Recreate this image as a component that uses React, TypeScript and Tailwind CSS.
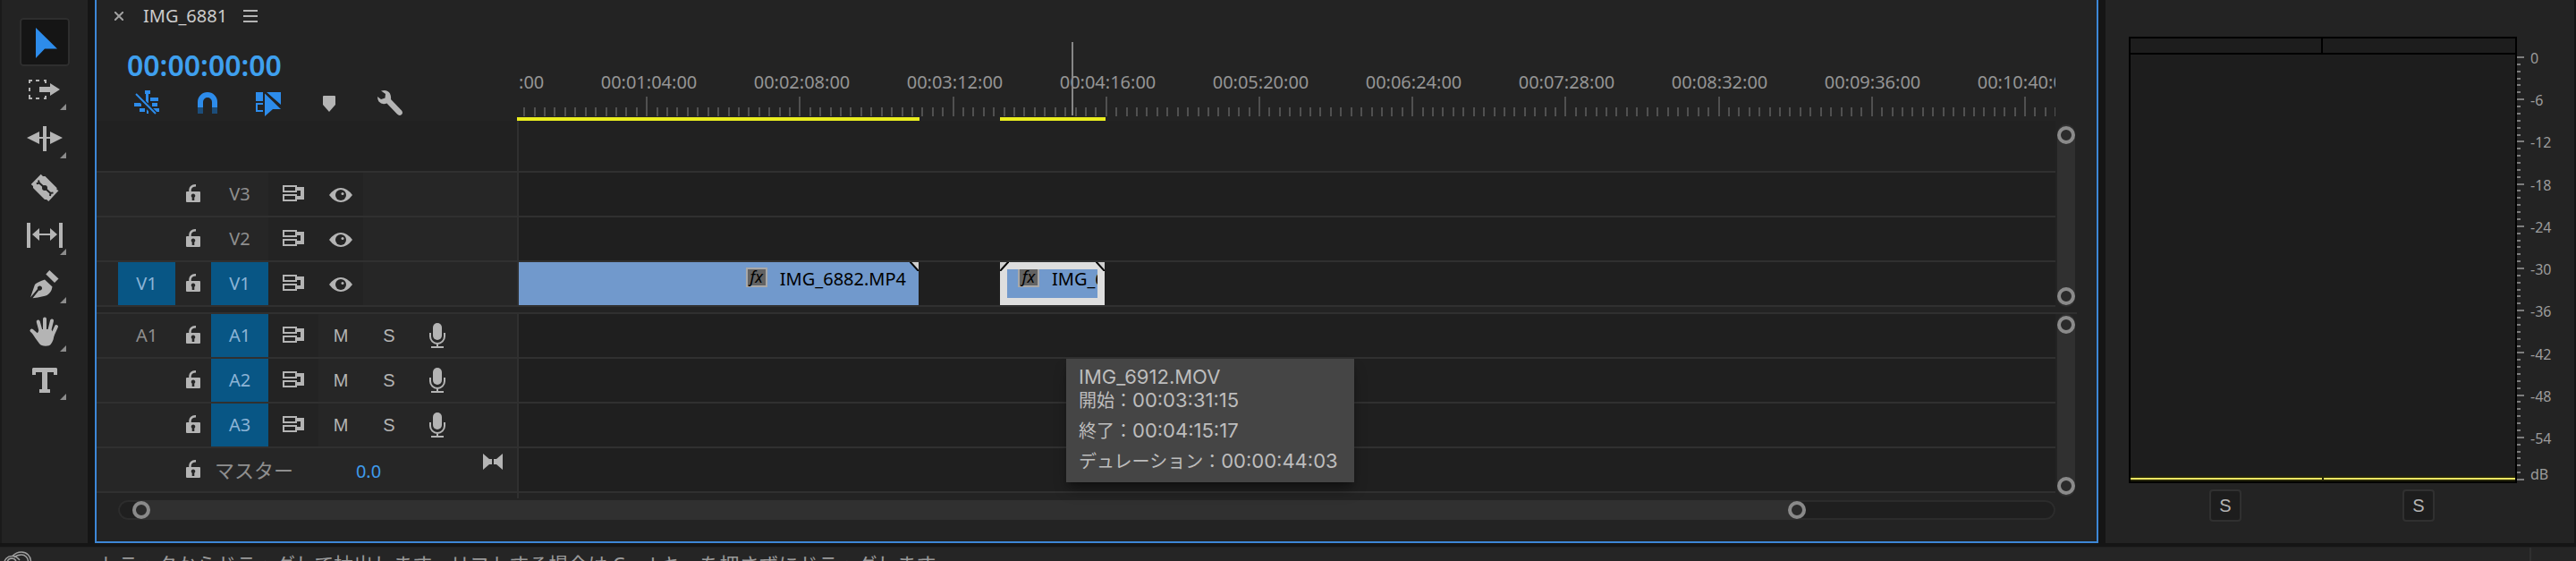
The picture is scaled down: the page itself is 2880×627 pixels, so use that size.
import { useState, type ReactNode } from 'react'

type ToolName = 'selection' | 'trackSelect' | 'ripple' | 'razor' | 'slip' | 'pen' | 'hand' | 'type'

type Tool = {
  name: ToolName
  label: string
  hasMenu: boolean
}

type Track = {
  id: string
  source?: string
  sourceActive?: boolean
  targeted: boolean
}

const TOOLS: Tool[] = [
  { name: 'selection', label: '選択ツール', hasMenu: false },
  { name: 'trackSelect', label: 'トラックの前方選択ツール', hasMenu: true },
  { name: 'ripple', label: 'リップルツール', hasMenu: true },
  { name: 'razor', label: 'レーザーツール', hasMenu: false },
  { name: 'slip', label: 'スリップツール', hasMenu: true },
  { name: 'pen', label: 'ペンツール', hasMenu: true },
  { name: 'hand', label: '手のひらツール', hasMenu: true },
  { name: 'type', label: '横書き文字ツール', hasMenu: true },
]

const VIDEO_TRACKS: Track[] = [
  { id: 'V3', targeted: false },
  { id: 'V2', targeted: false },
  { id: 'V1', source: 'V1', sourceActive: true, targeted: true },
]

const AUDIO_TRACKS: Track[] = [
  { id: 'A1', source: 'A1', sourceActive: false, targeted: true },
  { id: 'A2', targeted: true },
  { id: 'A3', targeted: true },
]

const RULER_LABELS = [
  '00:00:00:00',
  '00:01:04:00',
  '00:02:08:00',
  '00:03:12:00',
  '00:04:16:00',
  '00:05:20:00',
  '00:06:24:00',
  '00:07:28:00',
  '00:08:32:00',
  '00:09:36:00',
  '00:10:40:00',
]

const METER_LABELS = ['0', '-6', '-12', '-18', '-24', '-30', '-36', '-42', '-48', '-54']

// Ruler scale: one major tick every 64 seconds, 15 divisions each
const MAJOR_TICK_PX = 171.2
const FIRST_MAJOR_PX = -28
const DIVISIONS = 15

export default function App() {
  return (
    <div className="h-screen flex flex-col overflow-hidden bg-[#151515] font-['Noto_Sans','Noto_Sans_CJK_JP',sans-serif] text-[20px] text-[#8f8f8f]">
      <main className="flex-1 min-h-0 flex gap-2 pb-1 pr-[2px]">
        <ToolPanel />
        <TimelinePanel />
        <MeterPanel />
      </main>
      <StatusBar />
    </div>
  )
}

function ToolPanel() {
  const [active, setActive] = useState<ToolName>('selection')

  return (
    <nav className="w-[98px] shrink-0 pt-5 flex flex-col items-center bg-[#232323] border-l-2 border-[#1a1a1a]">
      {TOOLS.map((tool) => {
        const isActive = tool.name === active
        return (
          <button
            key={tool.name}
            type="button"
            aria-label={tool.label}
            className={`w-14 h-[54px] shrink-0 rounded ${isActive ? 'bg-[#151515] ring-2 ring-inset ring-[#2e2e2e] text-[#2d8ceb]' : 'text-[#b4b4b4]'}`}
            onClick={() => setActive(tool.name)}
          >
            <svg width="56" height="54" viewBox="0 0 56 54" fill="currentColor">
              <ToolGlyph name={tool.name} />
              {tool.hasMenu && <path d="M52 42v7h-7z" fill="#8c8c8c" />}
            </svg>
          </button>
        )
      })}
    </nav>
  )
}

function ToolGlyph({ name }: { name: ToolName }) {
  switch (name) {
    case 'selection':
      return <path d="M18 11L42 34.5H28L18 45Z" />
    case 'trackSelect':
      return (
        <>
          <path d="M11 19v-3h3M18 16h4M27 16h2v3M11 24v4M11 32v4h3M18 36h4M27 36h2v-3" fill="none" stroke="currentColor" strokeWidth="2" />
          <path d="M22 23h12v-4l11 7-11 7v-4H22z" />
        </>
      )
    case 'ripple':
      return <path d="M26 13h4v28h-4zM8 26l14-7v6h4v2h-4v6zM48 26l-14-7v6h-4v2h4v6z" />
    case 'razor':
      return (
        <>
          <path d="M23.7 12.7L26 15L28.5 15L41.5 28L41.5 30L43.5 31L32.3 43L30 41L28 41L15 28L15 26L12.7 24Z" />
          <path d="M21 19.5l.8 3-3 .8M34 37l.5-3.2 3-.3M22 22.5L34.5 34" fill="none" stroke="#232323" strokeWidth="2" />
          <circle cx="28" cy="28" r="3" fill="#232323" />
        </>
      )
    case 'slip':
      return <path d="M8 13h4v28H8zM44 13h4v28h-4zM14 26l8-7v6h12v-6l8 7-8 7v-6H22v6z" />
    case 'pen':
      return (
        <>
          <path d="M12 42.5L17 28Q19 25.5 28 22.5L36.5 30.5Q35.5 37 30.5 40Q27 41.5 14.5 43.3L21.5 34.5A2.6 2.6 0 1 0 20 33Z" />
          <path d="M33.3 12L43.5 21.5L39 26L29.3 16.5Z" />
        </>
      )
    case 'hand':
      return (
        <>
          <path d="M13.5 25.5l7 6M20.7 15.5l3.3 12M28 12.5v14M36 14.5l-3 12M41 21l-5 11" fill="none" stroke="currentColor" strokeWidth="4" strokeLinecap="round" />
          <path d="M13 27C17 29 19 32 22 24H35L38.5 29C38.5 34 37 38 35 40.5Q33.5 42.7 29 42.7Q24 42.7 22 40Q18 35 13 27Z" />
        </>
      )
    case 'type':
      return <path d="M15 13H41L42 14V21H38V18H31V37H34V41H22V37H25V18H18V21H14V14Z" />
  }
}

function TimelinePanel() {
  return (
    <section className="relative flex-1 min-w-0 flex flex-col overflow-hidden bg-[#232323] border-x-2 border-b-2 border-[#3d87d6]">
      {/* Sequence tab */}
      <div className="h-9 shrink-0 flex items-center pl-5">
        <button type="button" aria-label="シーケンスを閉じる" className="w-[10px] h-[10px]">
          <svg width="10" height="10" viewBox="0 0 10 10" stroke="#a0a0a0" strokeWidth="2">
            <path d="M0 0L10 10M10 0L0 10" />
          </svg>
        </button>
        <h1 className="ml-[22px] text-[20px] leading-7 text-[#cccccc]">IMG_6881</h1>
        <button type="button" aria-label="パネルメニュー" className="ml-[18px] w-4 h-4">
          <svg width="16" height="16" viewBox="0 0 16 16" fill="#b4b4b4">
            <path d="M0 1h16v2H0zM0 7h16v2H0zM0 13h16v2H0z" />
          </svg>
        </button>
      </div>

      <div className="h-[99px] shrink-0 flex">
        <div className="w-[470px] shrink-0 pt-4">
          <div className="h-[42px] pl-[34px] text-[32px] leading-[42px] font-semibold text-[#3fa0ef]">00:00:00:00</div>
          <TimelineOptions />
        </div>
        <Ruler />
      </div>

      {/* Video tracks */}
      <div className="flex shrink-0">
        <div className="flex-1 min-w-0">
          <div className="h-[58px] flex border-b-2 border-[#303030] bg-[#212121]">
            <div className="w-[472px] border-r-2 border-[#303030]" />
          </div>
          {VIDEO_TRACKS.map((track) => (
            <TrackRow key={track.id} header={<TrackHeader track={track} kind="video" />}>
              {track.id === 'V1' && <Clips />}
            </TrackRow>
          ))}
        </div>
        <div className="w-[46px] shrink-0 pt-1 pl-[2px]">
          <VerticalZoomBar />
        </div>
      </div>

      <div className="h-2 shrink-0 mr-[22px] border-b-2 border-[#303030]" />

      {/* Audio tracks */}
      <div className="flex-1 min-h-0 flex">
        <div className="flex-1 min-w-0 flex flex-col">
          {AUDIO_TRACKS.map((track) => (
            <TrackRow key={track.id} header={<TrackHeader track={track} kind="audio" />} />
          ))}
          <TrackRow header={<MasterHeader />} />
          <div className="flex-1 w-[472px] border-r-2 border-[#303030]" />
        </div>
        <div className="w-[46px] shrink-0 pb-[2px] pl-[2px]">
          <VerticalZoomBar />
        </div>
      </div>

      {/* Horizontal zoom bar */}
      <div className="h-[22px] shrink-0 mt-[2px] mb-6 ml-6 mr-[46px] pl-4 flex rounded-full bg-[#1f1f1f] ring-2 ring-inset ring-[#2c2c2c]">
        <div className="w-[87%] h-full flex items-center justify-between bg-[#303030] rounded-full">
          <Knob />
          <Knob />
        </div>
      </div>

      <ClipTooltip />
    </section>
  )
}

function TimelineOptions() {
  return (
    <div className="h-[41px] pl-[22px] flex items-center text-[#2d8ceb]">
      <OptionButton label="ネストとして挿入">
        <path d="M13 1h6v4h-2v10h-3V5h-1zM19 9h9v4h-9zM1 15h8v4H1zM12 15h4l4 4h-8zM21 15h6v4h-6zM7 21h6v4H7zM15 22h2v5h-2zM22 21h7v4h-7z" />
        <path d="M2 5L26 29" stroke="#232323" strokeWidth="6" />
        <path d="M3 5L25 27" stroke="currentColor" strokeWidth="2" />
      </OptionButton>
      <OptionButton label="スナップ">
        <path d="M7 20V14a8 8 0 0 1 16 0V20" fill="none" stroke="currentColor" strokeWidth="6" />
        <path d="M4 20h6v7H4zM20 20h6v7h-6z" fill="#1c4d7a" />
      </OptionButton>
      <OptionButton label="リンクされた選択">
        <path d="M1 3h8v10H1zM13 3h16v14zM11 4L29 22H20L11 30Z" />
        <path d="M9 16H2V24H9" fill="none" stroke="currentColor" strokeWidth="2" />
        <path d="M11 3L29 20" stroke="#232323" strokeWidth="2" />
      </OptionButton>
      <OptionButton label="マーカーを追加">
        <path d="M8 8q0-1 1-1h12q1 0 1 1v9l-7 8-7-8z" fill="#b4b4b4" />
      </OptionButton>
      <OptionButton label="タイムライン表示設定">
        <path
          d="M5 1.5Q12 -.5 15 4.5Q16.5 8 16 11L28 23.5Q30 26 28 28Q25.5 30 23 27.5L11.5 15.5Q6 17.5 2.5 13.5Q1 11 1 8L5 11L9.5 9.5L10 5Z"
          fill="#b4b4b4"
        />
      </OptionButton>
    </div>
  )
}

function OptionButton({ label, children }: { label: string; children: ReactNode }) {
  return (
    <button type="button" aria-label={label} className="w-[68px] flex justify-center">
      <svg width="30" height="30" viewBox="0 0 30 30" fill="currentColor">
        {children}
      </svg>
    </button>
  )
}

function Ruler() {
  const ticks = Array.from({ length: RULER_LABELS.length * DIVISIONS }, (_, i) => ({
    x: Math.round(FIRST_MAJOR_PX + (i * MAJOR_TICK_PX) / DIVISIONS),
    major: i % DIVISIONS === 0,
  }))

  return (
    <div className="relative flex-1 min-w-0 mr-[46px] pt-[42px]">
      <div className="ml-[2px] overflow-hidden">
        <div className="-ml-[111px] flex h-7">
          {RULER_LABELS.map((label) => (
            <span key={label} className="w-[171px] shrink-0 text-center text-[20px] leading-7 text-[#959595]">
              {label}
            </span>
          ))}
        </div>
        <svg className="mt-[2px] w-full h-[22px]" fill="#505050" shapeRendering="crispEdges">
          {ticks.map((tick, i) => (
            <rect key={i} x={tick.x - 1} y={tick.major ? 0 : 12} width="2" height={tick.major ? 22 : 10} />
          ))}
        </svg>
      </div>
      {/* Render bar */}
      <div className="mt-px h-1 flex">
        <div className="w-[450px] bg-[#e8ec1e]" />
        <div className="ml-[90px] w-[118px] bg-[#e8ec1e]" />
      </div>
      <div className="absolute top-[11px] left-[620px] w-[2px] h-[82px] bg-[#868686]" />
    </div>
  )
}

function TrackRow({ header, children }: { header: ReactNode; children?: ReactNode }) {
  return (
    <div className="h-[50px] shrink-0 flex border-b-2 border-[#303030]">
      <div className="w-[472px] shrink-0 bg-[#262626] border-r-2 border-[#303030]">{header}</div>
      <div className="flex-1 min-w-0 flex bg-[#1f1f1f]">{children}</div>
    </div>
  )
}

function TrackHeader({ track, kind }: { track: Track; kind: 'video' | 'audio' }) {
  return (
    <div className="h-full pl-6 grid grid-cols-[64px_40px_64px_56px_50px_58px_50px] text-[20px] leading-7">
      {track.source ? (
        <button type="button" className={track.sourceActive ? 'bg-[#085685] text-[#8cb4d6]' : ''}>
          {track.source}
        </button>
      ) : (
        <span />
      )}
      <LockButton />
      <button type="button" className={track.targeted ? 'bg-[#085685] text-[#8cb4d6]' : ''}>
        {track.id}
      </button>
      <button type="button" aria-label="同期ロック" className="flex items-center justify-center pb-[2px] bg-[#232323]">
        <svg width="24" height="18" viewBox="0 0 24 18" fill="#b4b4b4">
          <path
            fillRule="evenodd"
            d="M0 0h16v2h8v14h-8v2H0v-8h16v2h4V6h-4v2H0zM2 2v4h12V2zM2 12v4h12v-4z"
          />
        </svg>
      </button>
      {kind === 'video' ? (
        <button type="button" aria-label="トラック出力の切り替え" className="flex items-center justify-center pt-[2px] bg-[#232323]">
          <svg width="26" height="16" viewBox="0 0 26 16">
            <path d="M0 8Q6 0 13 0T26 8Q20 16 13 16T0 8Z" fill="#b4b4b4" />
            <circle cx="13" cy="8" r="6" fill="#232323" />
            <circle cx="15" cy="6.5" r="1.5" fill="#b4b4b4" />
          </svg>
        </button>
      ) : (
        <>
          <button type="button" className="font-['Liberation_Sans',sans-serif] text-[#b4b4b4]">M</button>
          <button type="button" className="font-['Liberation_Sans',sans-serif] text-[#b4b4b4]">S</button>
          <button type="button" aria-label="ボイスオーバー録音" className="flex items-center justify-center">
            <svg width="18" height="28" viewBox="0 0 18 28" fill="#b4b4b4">
              <rect x="4" y="0" width="10" height="19" rx="5" />
              <path d="M1 11v4a8 8 0 0 0 16 0v-4M9 23v4" fill="none" stroke="#b4b4b4" strokeWidth="2" />
              <rect x="2" y="26" width="14" height="2" />
            </svg>
          </button>
        </>
      )}
    </div>
  )
}

function MasterHeader() {
  return (
    <div className="h-full pl-[88px] pr-4 flex">
      <div className="w-10 flex">
        <LockButton />
      </div>
      <span className="w-[150px] pl-1 text-[22px] leading-[48px]">マスター</span>
      <input
        type="text"
        aria-label="マスターボリューム"
        defaultValue="0.0"
        className="w-[52px] pt-1 bg-transparent text-center text-[20px] text-[#3f9bec] outline-none"
      />
      <button type="button" aria-label="キーフレームナビゲーション" className="ml-auto mt-[6px] self-start">
        <svg width="22" height="18" viewBox="0 0 22 18" fill="#b4b4b4">
          <path d="M0 0L7 6h3v6H7L0 18zM22 0l-7 6h-3v6h3l7 6z" />
        </svg>
      </button>
    </div>
  )
}

function LockButton() {
  return (
    <button type="button" aria-label="トラックのロック" className="flex-1 flex items-center justify-center pb-[2px]">
      <svg width="16" height="20" viewBox="0 0 16 20">
        <path d="M4.5 9V6Q5 1.500 11 1.200" fill="none" stroke="#b4b4b4" strokeWidth="2.5" />
        <rect x="0" y="8" width="16" height="12" rx="1" fill="#b4b4b4" />
        <path d="M8 10.5a2.3 2.3 0 0 1 1.3 4.2V18H6.7v-3.3A2.3 2.3 0 0 1 8 10.5z" fill="#262626" />
      </svg>
    </button>
  )
}

function Clips() {
  return (
    <>
      <div className="relative w-[447px] shrink-0 pt-[6px] pr-[14px] flex items-start justify-end gap-[14px] bg-[#7199cc]">
        <FxBadge />
        <ClipName name="IMG_6882.MP4" />
        <ClipCorner side="right" />
      </div>
      {/* Selected clip */}
      <div className="relative ml-[91px] w-[117px] shrink-0 py-2 px-2 bg-[#dedede]">
        <div className="h-full overflow-hidden bg-[#7199cc]">
          <div className="-mt-[2px] pl-3 flex items-start gap-[14px]">
            <FxBadge />
            <ClipName name="IMG_6912.MOV" />
          </div>
        </div>
        <ClipCorner side="left" />
        <ClipCorner side="right" />
      </div>
    </>
  )
}

function ClipName({ name }: { name: string }) {
  return <span className="whitespace-nowrap text-[20px] leading-[26px] text-black">{name}</span>
}

function FxBadge() {
  return (
    <span className="w-6 h-[22px] shrink-0 border-2 border-[#a8a8a8] bg-[#636363] text-center text-[18px] leading-[17px] italic text-black">
      fx
    </span>
  )
}

function ClipCorner({ side }: { side: 'left' | 'right' }) {
  return (
    <svg
      className={`absolute top-0 ${side === 'right' ? 'right-0' : 'left-0 -scale-x-100'}`}
      width="10"
      height="10"
      viewBox="0 0 10 10"
    >
      <path d="M1 0h9v10z" fill="#cfcfcf" />
      <path d="M0 -1L10 10" stroke="#000" strokeWidth="2" />
    </svg>
  )
}

function Knob() {
  return <span className="w-5 h-5 shrink-0 rounded-full border-4 border-[#8a8a8a] bg-[#2b2b2b]" />
}

function VerticalZoomBar() {
  return (
    <div className="w-5 h-full py-[2px] flex flex-col justify-between rounded-full bg-[#303030]">
      <Knob />
      <Knob />
    </div>
  )
}

function ClipTooltip() {
  return (
    <div
      role="tooltip"
      className="absolute top-[401px] left-[1084px] pt-[11px] pb-[7px] pl-[14px] pr-[18px] bg-[#454545] shadow-lg shadow-black/40 font-['Inter','Noto_Sans_CJK_JP',sans-serif] text-[22px] text-[#bdbdbd] whitespace-nowrap"
    >
      <p className="leading-[18px]">IMG_6912.MOV</p>
      <TooltipRow label="開始" value="00:03:31:15" />
      <TooltipRow label="終了" value="00:04:15:17" />
      <TooltipRow label="デュレーション" value="00:00:44:03" />
    </div>
  )
}

function TooltipRow({ label, value }: { label: string; value: string }) {
  return (
    <p className="h-[34px] leading-[34px]">
      <span className="text-[20px]">{label}：</span>
      {value}
    </p>
  )
}

function MeterPanel() {
  return (
    <section className="w-[524px] shrink-0 pt-[41px] pb-6 pl-[26px] flex flex-col bg-[#232323]">
      <div className="flex-1 min-h-0 flex">
        <div className="w-[434px] flex flex-col border-2 border-black bg-[#1d1d1d]">
          <div className="h-[18px] grid grid-cols-2 divide-x-2 divide-black border-b-2 border-black">
            <span />
            <span />
          </div>
          <div className="flex-1" />
          <div className="h-[6px] py-[2px] grid grid-cols-2 gap-[2px] bg-[#26260a]">
            <span className="bg-[#ebe562]" />
            <span className="bg-[#ebe562]" />
          </div>
        </div>
        <div className="pt-[23px] pb-1">
          <svg className="w-2 h-full overflow-visible" fill="#7d7d7d" shapeRendering="crispEdges">
            {Array.from({ length: 61 }, (_, i) => (
              <rect key={i} x="0" y={`${(i / 60) * 100}%`} width={i % 6 === 0 ? 8 : 4} height="2" transform="translate(0 -1)" />
            ))}
          </svg>
        </div>
        <div className="pt-[14px] pl-[7px] flex flex-col text-[16px] leading-5 text-[#9c9c9c]">
          <div className="flex-1 flex flex-col justify-between">
            {METER_LABELS.map((label) => (
              <span key={label}>{label}</span>
            ))}
          </div>
          <span className="mt-5">dB</span>
        </div>
      </div>
      <div className="mt-[7px] w-[432px] grid grid-cols-2 justify-items-center">
        <SoloButton channel="左" />
        <SoloButton channel="右" />
      </div>
    </section>
  )
}

function SoloButton({ channel }: { channel: string }) {
  return (
    <button
      type="button"
      aria-label={`ソロ ${channel}`}
      className="w-9 h-9 rounded border-2 border-[#303030] bg-[#1d1d1d] font-['Liberation_Sans',sans-serif] text-[20px] leading-7 text-[#b4b4b4]"
    >
      S
    </button>
  )
}

function StatusBar() {
  return (
    <footer className="h-4 shrink-0 pl-1 flex items-start overflow-hidden bg-[#252525] border-t border-[#202020]">
      <svg className="mt-1 shrink-0" width="32" height="24" viewBox="0 0 32 24" fill="none" stroke="#a0a0a0" strokeWidth="1.5">
        <path d="M10 5.5Q14 1 20 1A10.5 10.5 0 0 1 30.5 11.5A10.5 10.5 0 0 1 20 22H9A8 8 0 0 1 9 5.5Q14 5 18 10" />
        <path d="M12 7Q15 4 20 4A7.5 7.5 0 0 1 27.5 11.5M4 13A5.5 5.5 0 0 1 9 8Q12 8 14 11" />
      </svg>
      <p className="ml-[74px] mt-[7px] text-[22px] leading-[22px] whitespace-nowrap text-[#9a9a9a]">
        トラックからドラッグして抽出します。リフトする場合は Cmd キーを押さずにドラッグします。
      </p>
      <div className="ml-auto mr-[50px] w-[2px] h-full bg-[#303030]" />
    </footer>
  )
}
